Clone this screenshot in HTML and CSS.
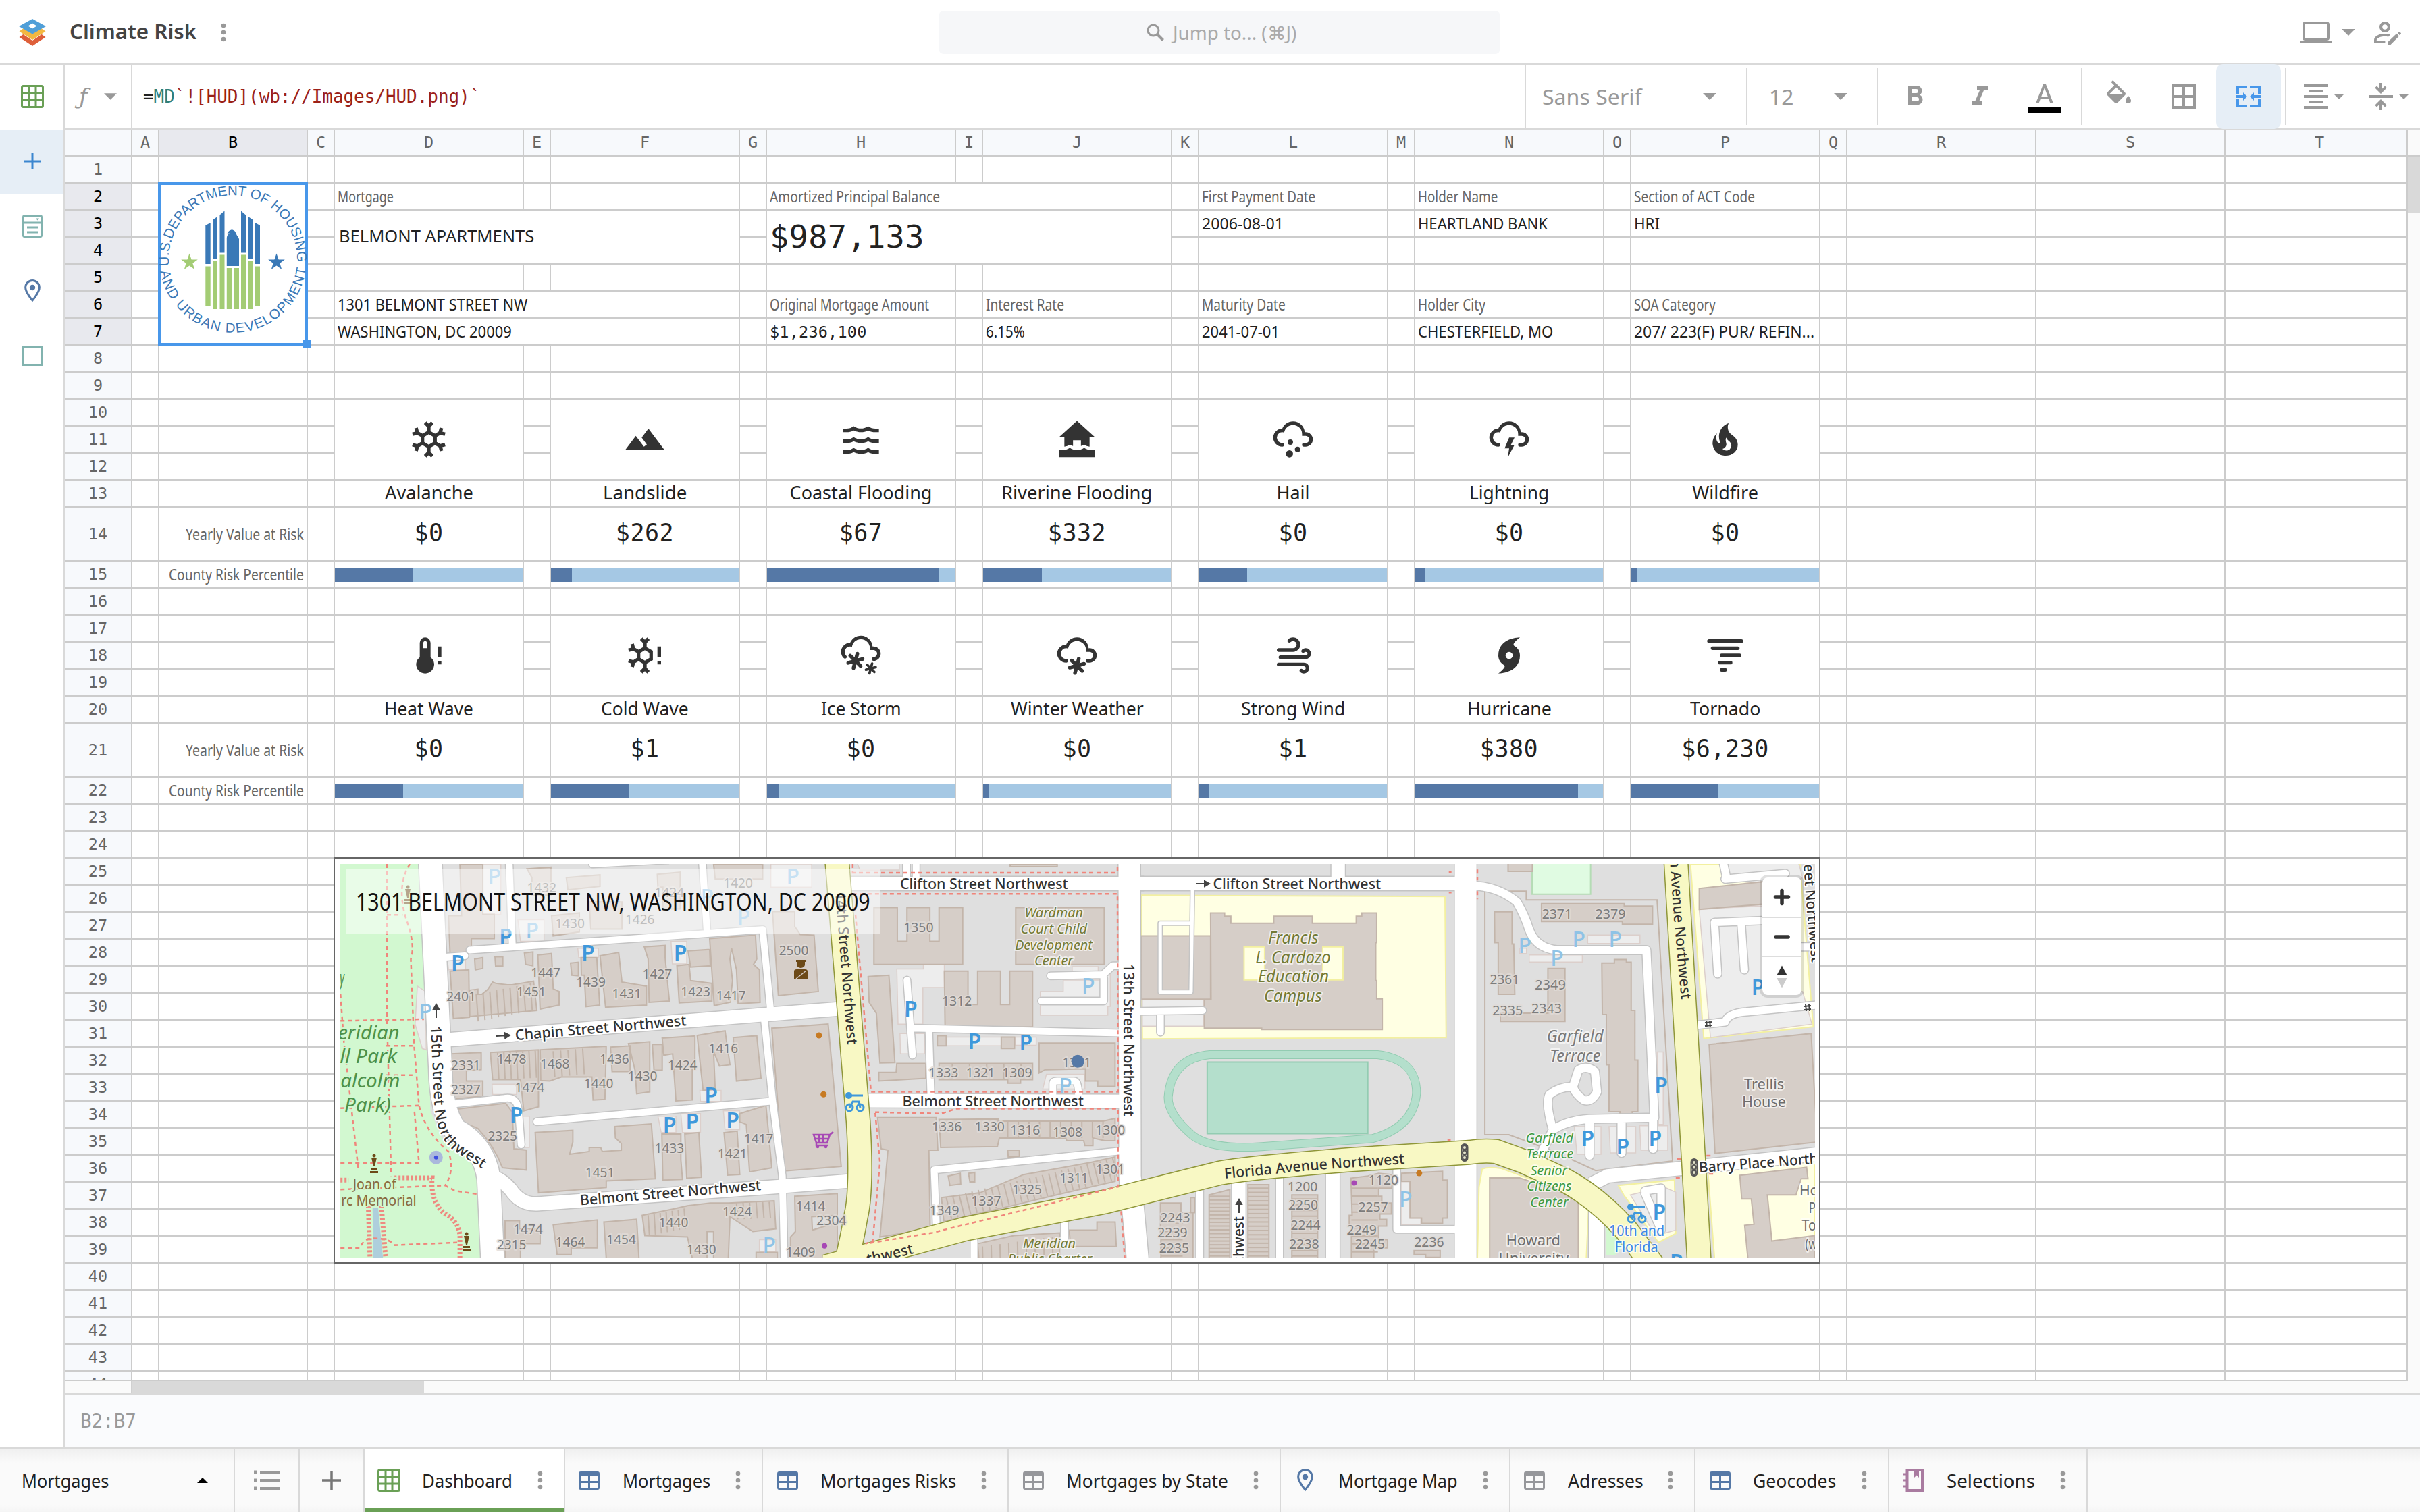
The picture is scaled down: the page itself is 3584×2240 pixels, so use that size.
FILE: index.html
```html
<!DOCTYPE html>
<html lang="en">
<head>
<meta charset="utf-8">
<title>Climate Risk</title>
<link rel="stylesheet" href="styles.css">
</head>
<body>
<svg class="defs" aria-hidden="true">
  <symbol id="i-dots" viewBox="0 0 8 28"><circle cx="4" cy="4" r="3.3"/><circle cx="4" cy="14" r="3.3"/><circle cx="4" cy="24" r="3.3"/></symbol>
  <symbol id="i-caret" viewBox="0 0 20 10"><path d="M0 0H20L10 10Z"/></symbol>
  <symbol id="i-sheet" viewBox="0 0 34 34"><rect x="1.5" y="1.5" width="31" height="31" rx="2" fill="none" stroke="currentColor" stroke-width="3"/><path d="M12 1V33M22 1V33M1 12H33M1 22H33" fill="none" stroke="currentColor" stroke-width="3"/></symbol>
  <symbol id="i-table" viewBox="0 0 31 27"><path fill-rule="evenodd" d="M3 0H28A3 3 0 0 1 31 3V24A3 3 0 0 1 28 27H3A3 3 0 0 1 0 24V3A3 3 0 0 1 3 0ZM3 7V14H14V7ZM17 7V14H28V7ZM3 17V24H14V17ZM17 17V24H28V17Z"/></symbol>
  <symbol id="i-pin" viewBox="0 0 24 34"><path d="M12 1.5A10.3 10.3 0 0 0 1.7 12C1.7 19 12 31 12 31S22.300 19 22.300 12A10.300 10.300 0 0 0 12 1.500Z" fill="none" stroke="currentColor" stroke-width="3"/><circle cx="12" cy="12" r="4.200"/></symbol>
  <symbol id="i-book" viewBox="0 0 32 34"><path d="M6.500 2H29V32H6.500Z" fill="none" stroke="currentColor" stroke-width="4"/><path d="M17 3H24V13L20.500 9.500L17 13Z"/><path d="M0 8H8M0 17H8M0 26H8" stroke="currentColor" stroke-width="3"/></symbol>
  <symbol id="i-flake" viewBox="0 0 24 24"><path d="M20.79,13.95L18.46,14.57L16.46,13.44V10.56L18.46,9.43L20.79,10.05L21.31,8.12L19.54,7.65L20,5.88L18.07,5.36L17.45,7.69L15.45,8.82L13,7.38V5.12L14.71,3.41L13.29,2L12,3.29L10.71,2L9.29,3.41L11,5.12V7.38L8.5,8.82L6.5,7.69L5.92,5.36L4,5.88L4.47,7.65L2.7,8.12L3.22,10.05L5.55,9.43L7.55,10.56V13.45L5.55,14.58L3.22,13.96L2.7,15.89L4.47,16.36L4,18.12L5.93,18.64L6.55,16.31L8.55,15.18L11,16.62V18.88L9.29,20.59L10.71,22L12,20.71L13.29,22L14.7,20.59L13,18.88V16.62L15.5,15.17L17.5,16.3L18.12,18.63L20,18.12L19.53,16.35L21.3,15.88L20.79,13.95M9.5,10.56L12,9.11L14.5,10.56V13.44L12,14.89L9.5,13.44V10.56Z"/></symbol>
  <symbol id="i-slide" viewBox="0 0 24 24"><path d="M14,6L10.25,11L13.1,14.8L11.5,16C9.81,13.75 7,10 7,10L1,18H23L14,6Z"/></symbol>
  <symbol id="i-waves" viewBox="0 0 24 24"><path d="M20,12H22V14H20C18.62,14 17.26,13.65 16,13C13.5,14.3 10.5,14.3 8,13C6.74,13.65 5.37,14 4,14H2V12H4C5.39,12 6.78,11.53 8,10.67C10.44,12.38 13.56,12.38 16,10.67C17.22,11.53 18.61,12 20,12M20,6H22V8H20C18.62,8 17.26,7.65 16,7C13.5,8.3 10.5,8.3 8,7C6.74,7.65 5.37,8 4,8H2V6H4C5.39,6 6.78,5.53 8,4.67C10.44,6.38 13.56,6.38 16,4.67C17.22,5.53 18.61,6 20,6M20,18H22V20H20C18.62,20 17.26,19.65 16,19C13.5,20.3 10.5,20.3 8,19C6.74,19.65 5.37,20 4,20H2V18H4C5.39,18 6.78,17.53 8,16.67C10.44,18.38 13.56,18.38 16,16.67C17.22,17.53 18.61,18 20,18Z"/></symbol>
  <symbol id="i-house" viewBox="0 0 24 24"><path d="M12 1.700L2.200 10.600H5V16C6.100 15.900 7.100 15.500 8 14.900C8.600 15.300 9.200 15.600 9.800 15.700V12.500H14.200V15.700C14.800 15.600 15.400 15.300 16 14.900C16.900 15.500 17.900 15.900 19 16V10.600H21.800ZM2 18V21.800H22V18H20C18.600 18 17.200 17.500 16 16.700C13.600 18.400 10.400 18.400 8 16.700C6.800 17.500 5.400 18 4 18Z"/></symbol>
  <symbol id="i-cloud" viewBox="0 0 24 24"><path d="M6,14A1,1 0 0,1 7,15A1,1 0 0,1 6,16A5,5 0 0,1 1,11A5,5 0 0,1 6,6C7,3.65 9.3,2 12,2C15.43,2 18.24,4.66 18.5,8.03L19,8A4,4 0 0,1 23,12A4,4 0 0,1 19,16H18A1,1 0 0,1 17,15A1,1 0 0,1 18,14H19A2,2 0 0,0 21,12A2,2 0 0,0 19,10H17V9A5,5 0 0,0 12,4C9.5,4 7.45,5.82 7.06,8.19C6.73,8.07 6.37,8 6,8A3,3 0 0,0 3,11A3,3 0 0,0 6,14"/></symbol>
  <symbol id="i-hail" viewBox="0 0 24 24"><use href="#i-cloud"/><circle cx="10" cy="20" r="2"/><circle cx="14.500" cy="17.500" r="1.500"/><circle cx="10.500" cy="13.500" r="1.500"/></symbol>
  <symbol id="i-bolt" viewBox="0 0 24 24"><use href="#i-cloud"/><path d="M12,11H15L13,15H15L11.25,22L12,17H9.5L12,11Z"/></symbol>
  <symbol id="i-fire" viewBox="0 0 24 24"><path d="M17.66 11.2C17.43 10.9 17.15 10.64 16.89 10.38C16.22 9.78 15.46 9.35 14.82 8.72C13.33 7.26 13 4.85 13.95 3C13 3.23 12.17 3.75 11.46 4.32C8.87 6.4 7.85 10.07 9.07 13.22C9.11 13.32 9.15 13.42 9.15 13.55C9.15 13.77 9 13.97 8.8 14.05C8.57 14.15 8.33 14.09 8.14 13.93C8.08 13.88 8.04 13.83 8 13.76C6.87 12.33 6.69 10.28 7.45 8.64C5.78 10 4.87 12.3 5 14.47C5.06 14.97 5.12 15.47 5.29 15.97C5.43 16.57 5.7 17.17 6 17.7C7.08 19.43 8.95 20.67 10.96 20.92C13.1 21.19 15.39 20.8 17.03 19.32C18.86 17.66 19.5 15 18.56 12.72L18.43 12.46C18.22 12 17.66 11.2 17.66 11.2M14.5 17.5C14.22 17.74 13.76 18 13.4 18.1C12.28 18.5 11.16 17.94 10.5 17.28C11.69 17 12.4 16.12 12.61 15.23C12.78 14.43 12.46 13.77 12.33 13C12.21 12.26 12.23 11.63 12.5 10.94C12.69 11.32 12.89 11.7 13.13 12C13.9 13 15.11 13.44 15.37 14.8C15.41 14.94 15.43 15.08 15.43 15.23C15.46 16.05 15.1 16.95 14.5 17.5Z"/></symbol>
  <symbol id="i-heat" viewBox="0 0 24 24"><path fill-rule="evenodd" d="M17 7H19V13H17ZM17 15H19V17H17ZM13 13V5A3 3 0 0 0 7 5V13A5 5 0 1 0 13 13M10 4A1 1 0 0 1 11 5V8H9V5A1 1 0 0 1 10 4Z"/></symbol>
  <symbol id="i-cold" viewBox="0 0 24 24"><path d="M16.46,14.600V9.400L15.45,8.82L13,7.38V5.12L14.71,3.41L13.29,2L12,3.29L10.71,2L9.29,3.41L11,5.12V7.38L8.5,8.82L6.5,7.69L5.92,5.36L4,5.88L4.47,7.65L2.7,8.12L3.22,10.05L5.55,9.43L7.55,10.56V13.45L5.55,14.58L3.22,13.96L2.7,15.89L4.47,16.36L4,18.12L5.93,18.64L6.55,16.31L8.55,15.18L11,16.62V18.88L9.29,20.59L10.71,22L12,20.71L13.29,22L14.7,20.59L13,18.88V16.62L15.5,15.17ZM9.5,10.56L12,9.11L14.5,10.56V13.44L12,14.89L9.5,13.44V10.56Z"/><path d="M19 7H21V13H19ZM19 15H21V17H19Z"/></symbol>
  <symbol id="i-star6" viewBox="0 0 24 24"><path d="M4,16.36C3.86,15.82 4.18,15.25 4.73,15.11L7,14.5L5.33,12.86C4.93,12.46 4.93,11.81 5.33,11.4C5.73,11 6.4,11 6.79,11.4L8.45,13.05L9.04,10.8C9.18,10.24 9.75,9.92 10.29,10.07C10.85,10.21 11.17,10.78 11,11.33L10.42,13.58L12.67,13C13.22,12.83 13.79,13.15 13.93,13.71C14.08,14.25 13.76,14.82 13.2,14.96L10.95,15.55L12.6,17.21C13,17.6 13,18.27 12.6,18.67C12.2,19.07 11.54,19.07 11.15,18.67L9.5,17L8.89,19.27C8.75,19.83 8.18,20.14 7.64,20C7.08,19.86 6.77,19.29 6.91,18.74L7.5,16.5L5.26,17.09C4.71,17.23 4.14,16.92 4,16.36"/></symbol>
  <symbol id="i-ice" viewBox="0 0 24 24"><path d="M1,10A5,5 0 0,1 6,5C7,2.65 9.3,1 12,1C15.43,1 18.24,3.66 18.5,7.03L19,7A4,4 0 0,1 23,11A4,4 0 0,1 19,15A1,1 0 0,1 18,14A1,1 0 0,1 19,13A2,2 0 0,0 21,11A2,2 0 0,0 19,9H17V8A5,5 0 0,0 12,3C9.5,3 7.45,4.82 7.06,7.19C6.73,7.07 6.37,7 6,7A3,3 0 0,0 3,10C3,10.85 3.35,11.61 3.91,12.16C4.27,12.55 4.26,13.16 3.88,13.54C3.5,13.93 2.85,13.93 2.47,13.54C1.56,12.62 1,11.37 1,10"/><use href="#i-star6" width="24" height="24"/><g transform="translate(11.400 9) scale(.68)"><use href="#i-star6" width="24" height="24"/></g></symbol>
  <symbol id="i-snow" viewBox="0 0 24 24"><use href="#i-cloud"/><g transform="translate(3 2.700)"><use href="#i-star6" width="24" height="24"/></g></symbol>
  <symbol id="i-wind" viewBox="0 0 24 24"><path d="M4,10A1,1 0 0,1 3,9A1,1 0 0,1 4,8H12A2,2 0 0,0 14,6A2,2 0 0,0 12,4C11.45,4 10.95,4.22 10.59,4.59C10.2,5 9.56,5 9.17,4.59C8.78,4.2 8.78,3.56 9.17,3.17C9.9,2.45 10.9,2 12,2A4,4 0 0,1 16,6A4,4 0 0,1 12,10H4M19,12A1,1 0 0,0 20,11A1,1 0 0,0 19,10C18.72,10 18.47,10.11 18.29,10.29C17.9,10.68 17.27,10.68 16.88,10.29C16.5,9.9 16.5,9.27 16.88,8.88C17.42,8.34 18.17,8 19,8A3,3 0 0,1 22,11A3,3 0 0,1 19,14H5A1,1 0 0,1 4,13A1,1 0 0,1 5,12H19M18,18H4A1,1 0 0,1 3,17A1,1 0 0,1 4,16H18A3,3 0 0,1 21,19A3,3 0 0,1 18,22C17.17,22 16.42,21.66 15.88,21.12C15.5,20.73 15.5,20.1 15.88,19.71C16.27,19.32 16.9,19.32 17.29,19.71C17.47,19.89 17.72,20 18,20A1,1 0 0,0 19,19A1,1 0 0,0 18,18Z"/></symbol>
  <symbol id="i-hurricane" viewBox="0 0 24 24"><path d="M15,6.79C16.86,7.86 18,9.85 18,12C18,22 6,22 6,22C7.25,21.06 8.38,19.95 9.34,18.71C9.38,18.66 9.41,18.61 9.44,18.55C9.69,18.06 9.5,17.46 9,17.21C7.14,16.14 6,14.15 6,12C6,2 18,2 18,2C16.75,2.94 15.62,4.05 14.66,5.29C14.62,5.34 14.59,5.39 14.56,5.45C14.31,5.94 14.5,6.54 15,6.79M12,14A2,2 0 0,0 14,12A2,2 0 0,0 12,10A2,2 0 0,0 10,12A2,2 0 0,0 12,14Z"/></symbol>
  <symbol id="i-tornado" viewBox="0 0 24 24"><path d="M21,5H3A1,1 0 0,1 2,4A1,1 0 0,1 3,3H21A1,1 0 0,1 22,4A1,1 0 0,1 21,5M20,8A1,1 0 0,0 19,7H5A1,1 0 0,0 4,8A1,1 0 0,0 5,9H19A1,1 0 0,0 20,8M21,12A1,1 0 0,0 20,11H10A1,1 0 0,0 9,12A1,1 0 0,0 10,13H20A1,1 0 0,0 21,12M16,16A1,1 0 0,0 15,15H9A1,1 0 0,0 8,16A1,1 0 0,0 9,17H15A1,1 0 0,0 16,16M13,20A1,1 0 0,0 12,19H10A1,1 0 0,0 9,20A1,1 0 0,0 10,21H12A1,1 0 0,0 13,20Z"/></symbol>
</svg>

<header class="top">
  <div class="top-left">
    <svg class="logo" viewBox="0 0 40 40"><path d="M0.500 27L20 40L39.500 27L33 22.500L20 31L7 22.500Z" fill="#de5f3a"/><path d="M0.500 19L20 32L39.500 19L33 14.500L20 23L7 14.500Z" fill="#fff"/><path d="M0.500 18.500L20 31L39.500 18.500L33 14L20 22L7 14Z" fill="#f3b841"/><path fill-rule="evenodd" d="M20 0L40 11L20 22.500L0 11ZM20 6.500L13.500 10.500L20 14.500L26.500 10.500Z" fill="#509fd8"/></svg>
    <span class="title" data-w="188">Climate Risk</span>
    <svg class="dots"><use href="#i-dots"/></svg>
  </div>
  <div class="jump">
    <svg class="search" viewBox="0 0 28 28"><circle cx="11" cy="11" r="8" fill="none" stroke="#999" stroke-width="3"/><path d="M17 17L25.500 25.500" stroke="#999" stroke-width="4"/></svg>
    <span data-w="183">Jump to... (⌘J)</span>
  </div>
  <div class="top-right">
    <svg class="ico" viewBox="0 0 24 24"><path d="M4,6H20V16H4M20,18A2,2 0 0,0 22,16V6C22,4.89 21.1,4 20,4H4C2.89,4 2,4.89 2,6V16A2,2 0 0,0 4,18H0V20H24V18H20Z"/></svg>
    <svg class="caret"><use href="#i-caret"/></svg>
    <svg class="ico" viewBox="0 0 24 24"><path fill-rule="evenodd" d="M10 4A4 4 0 1 0 10 12A4 4 0 1 0 10 4ZM10 6.100A1.900 1.900 0 1 1 10 9.900A1.900 1.900 0 1 1 10 6.100Z"/><path d="M10 13C6 13 2 14.700 2 17.500V20H10.200V18.100H3.900V17.500C3.900 16.500 6.900 14.900 10 14.900C10.900 14.900 11.700 15 12.500 15.200L14 13.700C12.800 13.200 11.400 13 10 13ZM20.200 11.700L20.900 11.500L22 12.600L21.800 13.300L21 14.100L19.400 12.500ZM12 19.200L18.700 12.900L20.500 14.700L14 21.200H12Z"/></svg>
  </div>
</header>

<div class="work">
  <nav class="side">
    <div class="slot green"><svg class="s34"><use href="#i-sheet"/></svg></div>
    <div class="slot add"><svg class="s24" viewBox="0 0 24 24"><path d="M12 0V24M0 12H24" stroke="currentColor" stroke-width="3"/></svg></div>
    <div class="slot teal"><svg class="s34" viewBox="0 0 34 34"><g fill="none" stroke="currentColor" stroke-width="3"><rect x="3.500" y="1.500" width="27" height="31" rx="2"/><path d="M3 12H31M9 19H25M9 26H25"/></g><path d="M22 5.500H27L24.500 8.500Z"/></svg></div>
    <div class="slot blue"><svg class="pin"><use href="#i-pin"/></svg></div>
    <div class="slot teal"><svg class="s30" viewBox="0 0 30 30"><rect x="1.500" y="1.500" width="27" height="27" fill="none" stroke="currentColor" stroke-width="3"/></svg></div>
  </nav>
  <main class="panel">
    <div class="bar">
      <div class="fx"><span class="f">ƒ</span><svg class="caret"><use href="#i-caret"/></svg></div>
      <div class="formula">=<span class="fn">MD</span><span class="str">`![HUD](wb://Images/HUD.png)`</span></div>
      <div class="tools">
        <div class="pick family"><span data-w="147">Sans Serif</span><svg class="caret"><use href="#i-caret"/></svg></div>
        <div class="pick size"><span data-w="36">12</span><svg class="caret"><use href="#i-caret"/></svg></div>
        <div class="group three">
          <svg class="ico" viewBox="0 0 24 24"><path d="M13.5,15.5H10V12.5H13.5A1.5,1.5 0 0,1 15,14A1.5,1.5 0 0,1 13.5,15.5M10,6.5H13A1.5,1.5 0 0,1 14.5,8A1.5,1.5 0 0,1 13,9.5H10M15.6,10.79C16.57,10.11 17.25,9 17.25,8C17.25,5.74 15.5,4 13.25,4H7V18H14.04C16.14,18 17.75,16.3 17.75,14.21C17.75,12.69 16.89,11.39 15.6,10.79Z"/></svg>
          <svg class="ico" viewBox="0 0 24 24"><path d="M10,4V7H12.21L8.79,15H6V18H14V15H11.79L15.21,7H18V4H10Z"/></svg>
          <svg class="ico" viewBox="0 0 24 24"><path d="M9.62,12L12,5.67L14.37,12M11,3L5.5,17H7.75L8.87,14H15.12L16.25,17H18.5L13,3H11Z"/><path fill="#000" d="M0 20H24V24H0Z"/></svg>
        </div>
        <div class="group fills">
          <svg class="ico" viewBox="0 0 24 24"><path d="M19,11.5C19,11.5 17,13.67 17,15A2,2 0 0,0 19,17A2,2 0 0,0 21,15C21,13.67 19,11.5 19,11.5M5.21,10L10,5.21L14.79,10M16.56,8.94L7.62,0L6.21,1.41L8.59,3.79L3.44,8.94C2.85,9.5 2.85,10.47 3.44,11.06L8.94,16.56C9.23,16.85 9.62,17 10,17C10.38,17 10.77,16.85 11.06,16.56L16.56,11.06C17.15,10.47 17.15,9.5 16.56,8.94Z"/></svg>
          <svg class="ico" viewBox="0 0 24 24"><path d="M19,11H13V5H19M19,19H13V13H19M11,11H5V5H11M11,19H5V13H11M3,21H21V3H3V21Z"/></svg>
          <div class="merge"><svg class="ico" viewBox="0 0 24 24"><path d="M5,10H3V4H11V6H5V10M19,18H13V20H21V14H19V18M5,18V14H3V20H11V18H5M21,4H13V6H19V10H21V4M8,13V15L11,12L8,9V11H3V13H8M16,11V9L13,12L16,15V13H21V11H16Z"/></svg></div>
        </div>
        <div class="group aligns">
          <svg class="ico" viewBox="0 0 24 24"><path d="M3,3H21V5H3V3M7,7H17V9H7V7M3,11H21V13H3V11M7,15H17V17H7V15M3,19H21V21H3V19Z"/></svg>
          <svg class="caret sm"><use href="#i-caret"/></svg>
          <svg class="ico" viewBox="0 0 24 24"><path d="M3,11H21V13H3ZM11 2H13V6.200L15 4.200L16.400 5.600L12 10L7.600 5.600L9 4.200L11 6.200ZM11 22H13V17.800L15 19.800L16.400 18.400L12 14L7.600 18.400L9 19.800L11 17.800Z"/></svg>
          <svg class="caret sm"><use href="#i-caret"/></svg>
        </div>
      </div>
    </div>

    <div class="sheet-wrap">
      <div class="sheet" id="sheet">
        <div class="image-cell">
          <svg viewBox="236 272 218 238">
            <defs><path id="arcTop" d="M250.500 394A95 95 0 1 1 439.500 394"/><path id="arcBottom" d="M237.500 402A109 109 0 0 0 452.500 402"/></defs>
            <g class="hud-text"><text><textPath href="#arcTop" textLength="312" lengthAdjust="spacing">U.S.DEPARTMENT OF HOUSING</textPath></text><text><textPath href="#arcBottom" textLength="311" lengthAdjust="spacing">AND URBAN DEVELOPMENT</textPath></text></g>
            <g fill="#3a79b7"><path d="M304.300 334L311.700 330V391H304.300ZM315 325.700L322 321V383.500H315ZM325.500 318.500L332.500 312.500V374.500H325.500ZM385 334L377.900 330V391H385ZM374.700 325.700L367.700 321V383.500H374.700ZM364 318.500L357 312.500V374.500H364ZM335.800 394V353C336 348 339 346 340 345L336.500 346.500C338 342 342 339.500 345.500 341C350 343 349 347 352 350L354 354V394Z"/><path d="M409.500 375.500L412.600 384.500H421.800L414.400 390L417.200 399L409.500 393.500L401.800 399L404.600 390L397.200 384.500H406.400Z"/></g>
            <g fill="#a3cc74"><path d="M304.300 394.500H311.700V454H304.300ZM315 386H322V458H315ZM325.500 377.500H332.500V458H325.500ZM335.800 397H343.300V458H335.800ZM346.700 397H354V458H346.700ZM357 377.500H364V458H357ZM367.700 386H374.700V458H367.700ZM377.900 394.500H385V454H377.900Z"/><path d="M280.500 375.500L283.600 384.500H292.800L285.400 390L288.200 399L280.500 393.500L272.800 399L275.600 390L268.200 384.500H277.400Z"/></g>
          </svg>
          <i class="handle"></i>
        </div>
        <div class="map-cell">
          <svg id="map" viewBox="504 1280 2184 584"></svg>
          <div class="map-title"><span data-w="762">1301 BELMONT STREET NW, WASHINGTON, DC 20009</span></div>
          <div class="map-zoom">
            <svg viewBox="0 0 58 58"><path d="M29 19.500V38.500M19.500 29H38.500" stroke="#333" stroke-width="5.500" stroke-linecap="round"/></svg>
            <svg viewBox="0 0 58 58"><path d="M19.500 29H38.500" stroke="#333" stroke-width="5.500" stroke-linecap="round"/></svg>
            <svg viewBox="0 0 58 58"><path d="M21 28L29 13L37 28Z" fill="#333"/><path d="M21 32L29 47L37 32Z" fill="#ccc"/></svg>
          </div>
        </div>
      </div>
      <div class="vscroll"><div class="vhead"></div><div class="vthumb"></div></div>
    </div>
    <div class="hscroll"><div class="hcorner"></div><div class="hthumb"></div></div>
    <div class="status">B2:B7</div>
  </main>
</div>

<footer class="tabs">
  <div class="book"><span data-w="129">Mortgages</span><svg class="up" viewBox="0 0 16 8"><path d="M0 8H16L8 0Z"/></svg></div>
  <div class="tool"><svg viewBox="0 0 38 32"><path d="M9 4H38M9 16H38M9 28H38" stroke="#999" stroke-width="4"/><path d="M0 4H5M0 16H5M0 28H5" stroke="#999" stroke-width="5"/></svg></div>
  <div class="tool"><svg class="s28" viewBox="0 0 28 28"><path d="M14 0V28M0 14H28" stroke="#777" stroke-width="3.500"/></svg></div>
  <div class="tab active"><i><svg class="s34 green"><use href="#i-sheet"/></svg></i><span data-w="134">Dashboard</span><svg class="dots"><use href="#i-dots"/></svg></div>
  <div class="tab"><i><svg class="tbl blue"><use href="#i-table"/></svg></i><span data-w="130">Mortgages</span><svg class="dots"><use href="#i-dots"/></svg></div>
  <div class="tab"><i><svg class="tbl blue"><use href="#i-table"/></svg></i><span data-w="201">Mortgages Risks</span><svg class="dots"><use href="#i-dots"/></svg></div>
  <div class="tab"><i><svg class="tbl gray"><use href="#i-table"/></svg></i><span data-w="240">Mortgages by State</span><svg class="dots"><use href="#i-dots"/></svg></div>
  <div class="tab"><i><svg class="pin blue"><use href="#i-pin"/></svg></i><span data-w="177">Mortgage Map</span><svg class="dots"><use href="#i-dots"/></svg></div>
  <div class="tab"><i><svg class="tbl gray"><use href="#i-table"/></svg></i><span data-w="112">Adresses</span><svg class="dots"><use href="#i-dots"/></svg></div>
  <div class="tab"><i><svg class="tbl blue"><use href="#i-table"/></svg></i><span data-w="123">Geocodes</span><svg class="dots"><use href="#i-dots"/></svg></div>
  <div class="tab"><i><svg class="s34 plum"><use href="#i-book"/></svg></i><span data-w="131">Selections</span><svg class="dots"><use href="#i-dots"/></svg></div>
</footer>
<script src="script.js"></script>
</body>
</html>
```

FILE: styles.css
```css
* { box-sizing: border-box; }
body { margin: 0; width: 3584px; height: 2240px; overflow: hidden; display: flex; flex-direction: column; background: #fff; color: #222; font-family: "Noto Sans", sans-serif; }
svg { display: block; fill: currentColor; flex: none; }
.defs { position: absolute; width: 0; height: 0; }
[data-w] { display: inline-block; white-space: nowrap; transform-origin: 0 50%; }
.green { color: #6aa056; }
.blue { color: #5578a6; }
.teal { color: #82b3af; }
.gray { color: #96979b; }
.plum { color: #a97ba0; }
.s34 { width: 34px; height: 34px; }
.s30 { width: 30px; height: 30px; }
.s28 { width: 28px; height: 28px; }
.s24 { width: 24px; height: 24px; }
.pin { width: 24px; height: 34px; }
.tbl { width: 31px; height: 27px; }
.ico { width: 48px; height: 48px; }
.dots { width: 8px; height: 28px; color: #999; }
.caret { width: 20px; height: 10px; color: #999; }
.caret.sm { width: 16px; height: 8px; }

.top { height: 96px; flex: none; border-bottom: 2px solid #d9d9d9; display: grid; grid-template-columns: 1390px 832px 1fr; align-items: center; color: #999; padding-top: 2px; }
.top-left { display: flex; align-items: center; padding-left: 28px; }
.logo { width: 40px; height: 40px; margin-right: 35px; }
.title { font-size: 30px; font-weight: 600; line-height: 38px; padding-bottom: 2px; color: #444; }
.top .dots { margin-left: 36px; }
.jump { height: 64px; border-radius: 8px; background: #f6f7f9; display: flex; align-items: center; padding-left: 307px; gap: 12px; font-size: 27px; color: #aaa; }
.search { width: 28px; height: 28px; }
.top-right { display: flex; align-items: center; justify-content: flex-end; padding-right: 24px; }
.top-right .caret { margin: 0 24px 0 14px; }

.work { flex: 1; min-height: 0; display: flex; }
.side { width: 96px; border-right: 2px solid #d9d9d9; flex: none; }
.slot { height: 96px; display: flex; align-items: center; justify-content: center; padding: 0 0 2px 2px; }
.slot.add { background: #e6eef6; color: #3b86cf; }
.panel { flex: 1; min-width: 0; display: flex; flex-direction: column; }

.bar { height: 96px; flex: none; border-bottom: 2px solid #d9d9d9; display: flex; color: #999; }
.fx { width: 100px; border-right: 2px solid #d9d9d9; display: flex; align-items: center; gap: 14px; padding-left: 21px; }
.fx .f { font: italic 34px "DejaVu Serif", serif; line-height: 40px; width: 23px; }
.fx .caret { width: 19px; }
.formula { flex: 1; padding-left: 16px; font: 26px/94px "DejaVu Sans Mono", monospace; letter-spacing: -.05px; color: #222; white-space: pre; }
.fn { color: #2f7f79; }
.str { color: #9b2118; }
.tools { display: flex; width: 1326px; border-left: 2px solid #d9d9d9; align-items: center; }
.pick { height: 84px; border-right: 2px solid #d9d9d9; display: flex; align-items: center; justify-content: space-between; font-size: 31px; }
.family { width: 328px; padding: 0 44px 0 24px; }
.size { width: 194px; padding: 0 44px 0 32px; }
.group { display: flex; align-items: center; }
.three { width: 302px; height: 84px; border-right: 2px solid #d9d9d9; padding-left: 30px; gap: 48px; }
.fills { padding-left: 30px; width: 298px; gap: 48px; }
.merge { margin: 0 -24px; width: 96px; height: 96px; border-radius: 10px; background: #e6eef6; color: #4897ea; display: flex; align-items: center; justify-content: center; flex: none; }
.aligns { height: 84px; border-left: 2px solid #d9d9d9; margin-left: 2px; padding-left: 20px; }
.aligns .caret { margin: 0 30px 0 2px; }
.aligns .caret:last-child { margin-right: 0; }

.sheet-wrap { display: flex; height: 1854px; flex: none; }
.sheet { width: 3470px; height: 1854px; overflow: hidden; display: grid; grid-template-columns: 100px 40px 220px 40px 280px 40px 280px 40px 280px 40px 280px 40px 280px 40px 280px 40px 280px 40px 280px 280px 280px; grid-template-rows: repeat(14, 40px) 80px repeat(6, 40px) 80px repeat(22, 40px) 14px; border-right: 2px solid #ccc; border-bottom: 2px solid #ccc; }
.cell { border-right: 2px solid #ccc; border-bottom: 2px solid #ccc; background: #fff; min-width: 0; min-height: 0; display: flex; align-items: center; padding: 0 4px; line-height: 36px; white-space: nowrap; overflow: hidden; font-size: 23px; }
.cell.hd { background: #f7f9fc; color: #666; justify-content: center; font-family: "DejaVu Sans Mono", monospace; font-size: 23.500px; padding: 0; }
.cell.hd.on { background: #e8e9ee; color: #000; }
.cell.last { align-items: flex-start; border-bottom: 0; }
.cell.label { color: #666; }
.cell.right { justify-content: flex-end; }
.cell.big { font-size: 25px; padding: 0 6px 4px; }
.cell.mono { font-family: "DejaVu Sans Mono", monospace; font-size: 23.500px; letter-spacing: .2px; padding-top: 1px; }
.cell.huge { font-family: "DejaVu Sans Mono", monospace; font-size: 47px; letter-spacing: .3px; line-height: 60px; padding: 0 4px; }
.cell.icon { justify-content: center; padding: 0; color: #333; }
.cell.icon svg { width: 64px; height: 64px; }
.cell.name { justify-content: center; font-size: 27px; padding: 0 0 2px; }
.cell.money { justify-content: center; font-family: "DejaVu Sans Mono", monospace; font-size: 35px; letter-spacing: .5px; padding: 0 0 4px; }
.cell.pct { padding: 2px 0 0; }
.track { flex: 1; height: 20px; background: #a5c8e4; }
.fill { height: 20px; background: #5578a6; }

.image-cell { grid-area: 3 / 3 / 9 / 4; position: relative; z-index: 2; margin: -2px 0 0 -2px; border: 4px solid #4897ea; background: #fff; width: 222px; height: 242px; display: flex; align-items: center; justify-content: center; }
.image-cell svg { width: 218px; height: 238px; margin: -2px; }
.hud-text { font: 20.500px "Liberation Sans", sans-serif; fill: #3a79b7; }
.handle { position: absolute; right: -8px; bottom: -8px; width: 12px; height: 12px; background: #4897ea; }
.map-cell { grid-area: 26 / 5 / 41 / 18; position: relative; z-index: 1; margin: -2px 0 0 -2px; border: 2px solid #666; padding: 8px 6px 6px 8px; background: #fff; }
.map-cell > svg { width: 2184px; height: 584px; }
.map-title { position: absolute; left: 16px; top: 16px; width: 792px; height: 96px; background: rgba(255,255,255,.5); color: #111; font-size: 37px; line-height: 94px; padding-left: 15px; }
.map-zoom { position: absolute; right: 26px; top: 28px; width: 58px; height: 174px; border-radius: 8px; background: #fff; box-shadow: 0 0 0 4px rgba(0,0,0,.12); }
.map-zoom svg { width: 58px; height: 58px; }
.map-zoom svg + svg { border-top: 2px solid #ddd; }

.building { fill: #d6cec8; stroke: #c3b5aa; stroke-width: 2; }
.lot { fill: #ededed; stroke: #dccfcb; stroke-width: 1.500; }
.school { fill: #ffffe3; stroke: #f3f0a0; stroke-width: 2; }
.grass { fill: #d2f8d0; }
.lawn { fill: #e0fbe2; stroke: #b5dcb5; stroke-width: 2; }
.pitch { fill: #b4dfcc; stroke: #93ccb2; stroke-width: 2; }
.water { fill: #aecfdc; }
.walk { fill: none; stroke: #f0857b; stroke-width: 2.500; stroke-dasharray: 6 5; }
.steps { fill: none; stroke: #ee8a80; stroke-width: 7; stroke-dasharray: 3 3; }
.seam { fill: none; stroke: #c3b5aa; stroke-width: 2; }
.ring { fill: none; stroke: #b4dfcc; stroke-width: 11; }
.ring-edge { fill: none; stroke: #93ccb2; stroke-width: 13; }
.way { fill: none; stroke-linejoin: round; }
#map path[class] { vector-effect: non-scaling-stroke; }
#map text { font-family: "Noto Sans", sans-serif; paint-order: stroke; stroke: rgba(255,255,255,.65); stroke-width: 4px; stroke-linejoin: round; }
#map .num { font-size: 20px; fill: #7c7c7c; stroke: rgba(225,220,216,.8); }
#map .road { font-size: 21.500px; font-weight: 500; fill: #333; stroke: #fff; }
#map .on-yellow { stroke: #f8f8c4; }
#map .park { font-size: 29px; font-style: italic; fill: #4d9149; stroke: #d2f8d0; }
#map .memo { font-size: 22px; fill: #8a6a3f; stroke: #d2f8d0; }
#map .edu { font-size: 24.500px; font-style: italic; fill: #737a35; }
#map .edu-s { font-size: 20.500px; font-style: italic; fill: #737a35; }
#map .place { font-size: 24.500px; font-style: italic; fill: #7a7a7a; }
#map .plain { font-size: 22px; fill: #6d6d6d; }
#map .senior { font-size: 20.500px; font-style: italic; fill: #3e9a41; }
#map .bike { font-size: 22px; fill: #3d86e8; }
#map .p { font-size: 32px; font-weight: 600; fill: #3f98db; stroke: none; }
#map .p2 { font-size: 32px; font-weight: 500; fill: #8fc3e6; stroke: none; }

.vscroll { width: 18px; background: #fafafa; }
.vhead { height: 40px; border-bottom: 2px solid #ccc; }
.vthumb { height: 84px; background: #d9d9d9; }
.hscroll { height: 20px; flex: none; display: flex; background: #fafafa; border-bottom: 2px solid #d9d9d9; }
.hcorner { width: 100px; border-right: 2px solid #d0d0d0; }
.hthumb { width: 432px; background: #d9d9d9; }
.status { height: 78px; flex: none; background: #fafbfd; color: #999; font: 27.500px/78px "DejaVu Sans Mono", monospace; padding-left: 23px; }

.tabs { height: 96px; flex: none; border-top: 2px solid #d9d9d9; background: linear-gradient(#efefef, #fafafa 22px, #fafafa 84px, #f5f5f5); display: flex; font-size: 27px; line-height: 94px; }
.tabs > div { border-right: 2px solid #d9d9d9; display: flex; align-items: center; flex: none; }
.tabs span { line-height: 92px; padding-top: 2px; }
.book { width: 348px; padding: 0 38px 0 32px; justify-content: space-between; }
.up { width: 16px; height: 8px; color: #000; }
.tool { width: 96px; justify-content: center; }
.tool svg { width: 38px; height: 32px; }
.tool svg.s28 { width: 28px; height: 28px; }
.tab { padding: 0 31px 0 15px; }
.tab i { width: 42px; margin-right: 28px; display: flex; justify-content: center; }
.tab .dots { margin-left: 37px; }
.tab.active { background: #fff; box-shadow: inset 0 -6px #6aa056; }
```

FILE: script.js
```js
const sheet = document.getElementById('sheet');
const letters = 'ABCDEFGHIJKLMNOPQRST';
const spans = {};
const content = {};

// Each entry: cell reference -> column span, row span, class, html
function put(ref, cls, html, cs = 1, rs = 1) {
  content[ref] = { cls, html, cs, rs };
  const c = letters.indexOf(ref[0]), r = +ref.slice(1);
  for (let y = r; y < r + rs; y++) for (let x = c; x < c + cs; x++) spans[letters[x] + y] = true;
}
const t = (s, w) => `<span data-w="${w}">${s}</span>`;

put('D2', 'label', t('Mortgage', 83));
put('D3', 'big', t('BELMONT APARTMENTS', 289), 3, 2);
put('D6', '', t('1301 BELMONT STREET NW', 281), 3);
put('D7', '', t('WASHINGTON, DC 20009', 258), 3);
put('H2', 'label', t('Amortized Principal Balance', 252), 3);
put('H3', 'huge', '$987,133', 3, 2);
put('H6', 'label', t('Original Mortgage Amount', 236));
put('H7', 'mono', '$1,236,100');
put('J6', 'label', t('Interest Rate', 116));
put('J7', '', t('6.15%', 58));
put('L2', 'label', t('First Payment Date', 168));
put('L3', '', t('2006-08-01', 121));
put('L6', 'label', t('Maturity Date', 124));
put('L7', '', t('2041-07-01', 115));
put('N2', 'label', t('Holder Name', 118));
put('N3', '', t('HEARTLAND BANK', 192));
put('N6', 'label', t('Holder City', 100));
put('N7', '', t('CHESTERFIELD, MO', 200));
put('P2', 'label', t('Section of ACT Code', 179));
put('P3', '', t('HRI', 38));
put('P6', 'label', t('SOA Category', 121));
put('P7', '', t('207/ 223(F) PUR/ REFIN...', 267));

const hazards = [
  [10, 13, [['flake', 'Avalanche', 131, '$0', 41.4], ['slide', 'Landslide', 124, '$262', 11], ['waves', 'Coastal Flooding', 211, '$67', 91.8], ['house', 'Riverine Flooding', 223, '$332', 31.2], ['hail', 'Hail', 49, '$0', 25.4], ['bolt', 'Lightning', 118, '$0', 5], ['fire', 'Wildfire', 98, '$0', 3]]],
  [17, 20, [['heat', 'Heat Wave', 132, '$0', 36.3], ['cold', 'Cold Wave', 130, '$1', 41.4], ['ice', 'Ice Storm', 119, '$0', 6.3], ['snow', 'Winter Weather', 197, '$0', 3], ['wind', 'Strong Wind', 154, '$1', 5], ['hurricane', 'Hurricane', 125, '$380', 86.7], ['tornado', 'Tornado', 104, '$6,230', 46.3]]]
];
for (const [top, base, list] of hazards) {
  list.forEach(([icon, name, w, money, pct], i) => {
    const c = 'DFHJLNP'[i];
    put(c + top, 'icon', `<svg><use href="#i-${icon}"/></svg>`, 1, 3);
    put(c + base, 'name', t(name, w));
    put(c + (base + 1), 'money', money);
    put(c + (base + 2), 'pct', `<div class="track"><div class="fill" style="width:${pct}%"></div></div>`);
  });
  put('B' + (base + 1), 'label right', t('Yearly Value at Risk', 175));
  put('B' + (base + 2), 'label right', t('County Risk Percentile', 200));
}
put('B2', 'skip', '', 1, 6);
put('D25', 'skip', '', 13, 15);

let html = '';
const cell = (c, r, cls, inner, cs = 1, rs = 1) =>
  `<div class="cell ${cls}" style="grid-area:${r} / ${c} / span ${rs} / span ${cs}">${inner}</div>`;
html += cell(1, 1, 'hd', '');
[...letters].forEach((l, i) => { html += cell(i + 2, 1, l === 'B' ? 'hd on' : 'hd', l); });
for (let r = 1; r <= 44; r++) {
  html += cell(1, r + 1, 'hd' + (r >= 2 && r <= 7 ? ' on' : '') + (r === 44 ? ' last' : ''), r);
  [...letters].forEach((l, i) => {
    const d = content[l + r];
    if (d) { if (d.cls !== 'skip') html += cell(i + 2, r + 1, d.cls, d.html, d.cs, d.rs); }
    else if (!spans[l + r]) html += cell(i + 2, r + 1, r === 44 ? 'last' : '', '');
  });
}
sheet.insertAdjacentHTML('afterbegin', html);

// Map tiles: origin and scale of each tile's local units
const T = {
  a: [480, 1260, .4847, .4018],
  b: [1180, 1260, .35714, .4018],
  c: [1640, 1260, .35714, .4018],
  d: [2120, 1260, .3954, .4018]
};
const tf = k => `translate(${T[k][0]} ${T[k][1]}) scale(${T[k][2]} ${T[k][3]})`;
const shape = ([k, cls, d]) => `<path class="${cls}" transform="${tf(k)}" d="${d}"/>`;
const px = (k, x) => (T[k][0] + x * T[k][2]).toFixed(1);
const py = (k, y) => (T[k][1] + y * T[k][3]).toFixed(1);

const ground = [
  ['a', 'grass', 'M40 40H290L320 740 325 960 360 1060 440 1110 470 1180 480 1510H40Z'],
  ['a', 'lot', 'M285 500L310 520 312 735 300 730 278 640ZM375 385H432V440H380ZM480 50H540V235H480ZM592 255H672V335H600ZM775 360H838V395H778ZM1060 335H1108V418H1064ZM1148 885H1213V925H1150ZM1020 980H1075V1040H1030ZM1090 970H1150V1040H1095ZM1220 960H1270V1030H1225ZM513 862H588V900H515ZM585 980H627V1095H600ZM1330 1435H1380V1480H1330ZM1365 50H1490V135H1365Z'],
  ['b', 'lot', 'M250 45H425V72H262ZM415 437H525V420H612V505H523V640H420ZM428 675H530V750H430ZM618 688H848V720H618ZM905 688H993V718H905ZM1010 520H1105V478H1258V450H1300V575H1290V607H1010ZM1142 428H1250V460H1142ZM1035 825H1195V880H1020Z'],
  ['c', 'school', 'M140 165L1400 170 1405 690 145 695Z'],
  ['c', 'lot', 'M145 550H400V648H145ZM1218 1220H1255V1355H1300V1380H1218Z'],
  ['c', 'school', 'M1545 1503V1230L1568 1180V1503Z'],
  ['d', 'school', 'M970 50H1380L1430 650 1020 693ZM190 1175Q210 1165 260 1172L590 1290 580 1503H172L178 1240ZM700 1235L910 1215 915 1412 850 1445 720 1270ZM1035 1180L1436 1145V1503H1060Z'],
  ['d', 'lawn', 'M377 40H596V161H377Z'],
  ['d', 'grass', 'M650 1340L700 1420 740 1440 690 1490 655 1493Z'],
  ['d', 'lot', 'M1003 215L1240 200 1390 100 1375 45H1090L1100 110 1240 120V205ZM1003 218L1240 200V520H1390L1425 640 1045 690ZM585 312H781V343H585ZM366 385H565V411H366ZM330 360H356V380H330ZM845 743H868V1010H850ZM535 1018H635V1120H545ZM665 1018H765V1115H670ZM780 1015H885V1105H785ZM745 1270L870 1240 915 1260V1400L840 1420Z'],
  ['d', 'seam', 'M200 150H355V182H845L903 1145 615 1180 460 1110 290 1048H200Z']
];
const buildings = [
  ['a', 'M415 50H485V235H520V325H450V370L385 385 380 240H420ZM620 68L693 62V165H635V100ZM740 100L843 90V132L745 145ZM1018 88L1088 80V215H1035V135H1020ZM1190 50H1340V105H1195ZM810 190H910V290H815ZM695 240L780 230V300L700 315ZM385 445L442 440 444 615 395 620ZM460 400L485 395V435L462 440ZM522 392H546V426H524ZM612 378L638 374V425L616 420ZM653 385L695 380 700 510 718 520V570L660 585ZM753 415L777 412V462L757 460ZM785 395H833L842 570 800 576 795 460H786ZM843 388L900 376 910 485 985 500V570L860 578ZM978 355L1042 350V395L1055 555 993 560 990 400ZM1112 370L1178 365 1180 425 1120 430ZM1078 425L1115 420 1120 480 1185 490V555L1085 562ZM1178 325L1318 312 1322 400 1312 420 1330 440 1332 560 1265 565 1260 440 1245 360 1240 400 1248 480 1240 560 1192 572ZM1370 225H1438V280L1455 310 1497 312 1510 520 1388 535Z'],
  ['a', 'M444 515L470 512V530H482L500 512 515 485 525 490 560 495H575L600 490 640 482 650 590 445 612ZM387 750L480 745V808L435 812V850H485V905L392 918ZM508 745L655 735V945L610 960 600 845 515 845ZM660 735L862 722 858 918 822 920 818 835 725 835 690 850 662 848ZM875 725L935 720V815L880 815ZM930 712L995 705V890L955 897 950 810ZM1003 715H1033V810H1008ZM1033 692L1133 684V785H1125V920L1075 923 1065 750 1038 755ZM1140 682L1225 665 1240 790 1208 795 1190 740 1195 880 1158 885ZM1250 690L1322 683 1335 840 1260 850ZM395 955L555 932 575 965 580 1100 618 1105V1178L545 1170Q520 1090 470 1025L440 1010 430 1010Z'],
  ['a', 'M645 1040L760 1032V1075L750 1120 810 1110V1095H845L850 1110 908 1105V1080L890 1060 888 1018 1000 1008 1012 1210 862 1218V1243L655 1262ZM1032 1045H1090V1140L1095 1213 1035 1215ZM1102 1045L1145 1040 1153 1205 1108 1208ZM1222 1040L1262 1035 1270 1195 1233 1197ZM1270 970L1350 940 1368 1170 1300 1185 1290 1010 1270 1000ZM1368 655L1540 640 1580 1165 1402 1182ZM553 1365H597V1395H660V1450H600V1503H553ZM700 1380L835 1362V1465H755V1490H712ZM855 1370L955 1360 962 1503H862ZM972 1345L1065 1322 1110 1310 1180 1300H1235L1375 1292 1380 1395 1310 1405 1240 1350 1235 1503H1190V1405H1170V1503H1125L1110 1425 980 1420ZM1438 1275L1568 1265V1345L1490 1350 1492 1400 1568 1370V1503H1425V1425L1440 1405ZM1320 1482H1385V1503H1320Z'],
  ['b', 'M320 210H417V335H457V210H552V335H590V210H688V420H320ZM908 210H1275V420H908ZM612 445H710V568H750V445H845V568H883V445H978V650H615ZM296 465L382 460 407 782 345 783 330 600 300 560ZM415 785H535V840L340 850V818H412ZM583 683H620V720H583ZM848 688H903V730H848ZM590 785H978V845H928V858H875V845H590ZM1005 710H1320V870H1248V850H1197V805L1030 808 1005 820ZM335 985H578L585 1105H548L553 1395 345 1425 378 1105 350 1100ZM590 992L835 990V998H1270L1320 988V1070H1278L1228 1060V1088H1195L1190 1070 1120 1070 1115 1060H840L832 1092 597 1095ZM875 1105H923V1130H877ZM628 1200L678 1190 680 1230 635 1235ZM712 1190L738 1187V1222H718ZM600 1280L760 1262 940 1195 1220 1150 1320 1130V1220L1100 1265 890 1310 610 1368ZM1130 1400H1245V1370H1320L1325 1460H1135ZM750 1450L900 1420 1090 1410V1503H755ZM885 50H1080V60H885Z'],
  ['c', 'M140 315H428V548H140ZM428 230H486V242H512V268H690V242H850V268H1032V242H1055V230H1117V340H1113V480H1117V547H1140V660H640V655H402V548H430ZM220 1300H305V1335H355V1503H222V1410H220ZM345 1280H362V1335H345ZM422 1270L508 1250V1503H422ZM583 1232H670V1503H583ZM765 1270H872V1503H765ZM1010 1208L1080 1200 1125 1190 1180 1195V1245H1125V1275H1138V1300H1178V1340H1130V1360H1158V1385H1125V1435H1162V1465H1105V1503H1012V1385H1003V1345H1015ZM1220 1190L1390 1183V1215H1410V1355H1390V1375H1303V1355H1255V1220H1220ZM1272 1475H1380V1500H1320V1490H1272Z'],
  ['d', 'M287 45H378V77H287ZM412 196H722V205H828V272H715V262H412ZM236 226H302V345H308L312 530H250V340H237ZM436 435H500V630H258V600H436ZM638 415H685V402H730V412H748V590H762V773H773V963H752V972H706V963H665V790H655V605H640ZM1003 140L1240 115V198L1003 217ZM1040 715L1422 675 1445 1075 1062 1117ZM218 1207H330L550 1280V1503H218ZM1155 1198L1405 1168 1410 1210H1385L1365 1270H1258L1275 1440 1436 1420V1503H1185L1173 1382 1208 1378 1198 1285H1162Z']
].map(([k, d]) => [k, 'building', d]);

// Party walls of terraced houses
let seams = '';
const seamRow = (k, n, x1, y1, x2, y2, dx, dy) => {
  for (let i = 0; i <= n; i++) {
    const x = x1 + (x2 - x1) * i / n, y = y1 + (y2 - y1) * i / n;
    seams += shape([k, 'seam', `M${x} ${y}l${dx} ${dy}`]);
  }
};
seamRow('a', 8, 465, 530, 630, 490, 6, 100);
seamRow('a', 6, 530, 745, 645, 738, 4, 100);
seamRow('a', 4, 700, 740, 790, 730, 5, 95);
seamRow('a', 6, 990, 1345, 1100, 1320, 4, 75);
seamRow('a', 5, 1260, 1300, 1360, 1295, 4, 60);
seamRow('b', 4, 645, 785, 930, 785, 0, 60);
seamRow('b', 9, 875, 998, 1270, 998, 0, 62);
seamRow('b', 26, 620, 1280, 1310, 1135, 22, 78);
seamRow('c', 16, 422, 1275, 422, 1495, 86, 0);
seamRow('c', 16, 583, 1245, 583, 1495, 86, 0);
seamRow('c', 10, 765, 1285, 765, 1495, 107, 0);
seamRow('c', 8, 1012, 1245, 1012, 1480, 110, 0);
seamRow('c', 5, 222, 1345, 222, 1495, 90, 0);
seamRow('b', 8, 770, 1460, 1060, 1425, 2, 70);

// tile, width, path
const minor = [
  ['a', 34, 'M324 30L355 800Q357 960 400 1030 490 1090 503 1210L515 1520'],
  ['a', 20, 'M355 700L1370 603 1620 580'],
  ['a', 20, 'M520 1205Q545 1215 570 1250 600 1305 650 1303L1400 1238 1640 1215'],
  ['a', 10, 'M445 367L1340 292 1365 600M1345 620L1370 920 1400 1200 1406 1520M565 30L575 350M1155 30L1170 300M650 1000L1360 925M390 935L550 914Q590 905 594 960L602 1085M370 393L430 388M820 50L1050 35'],
  ['b', 20, 'M200 122H1440M270 922L1380 925'],
  ['b', 10, 'M457 478L480 755M475 655L1340 673M548 665L556 900M1340 1108L570 1178 580 1410M735 1440V1520M1110 1370V1430M455 30V110M495 30V110M1052 462L1270 458 1310 425H1340M1015 555H1273V470M1062 900V860Q1062 850 1080 850H1150Q1168 850 1168 900'],
  ['b', 32, 'M1379 30L1382 1200 1415 1520'],
  ['c', 20, 'M60 122H1480'],
  ['c', 10, 'M383 1230V1520M714 1200V1520M1200 1180V1395M1200 1397H1450M130 593L395 590M220 600V670'],
  ['c', 20, 'M545 1200V1520M935 1190V1520M957 40V115'],
  ['c', 5, 'M353 140L347 522H219L219 268H350'],
  ['d', 32, 'M128 30V1520'],
  ['d', 12, 'M130 130Q240 125 320 190 350 240 365 290 390 360 470 367H805L835 985 590 990Q510 995 455 1030L412 1115M455 1030Q425 930 442 900 480 870 530 872L550 810Q580 790 612 815L620 890Q600 930 570 920 540 900 530 872M592 990V1125M712 990V1115M830 990V1100'],
  ['d', 20, 'M600 1230L660 1200 940 1172 1460 1118'],
  ['d', 11, 'M985 645L1100 632Q1110 600 1180 595L1440 570M1100 105L1325 85M1105 100L1090 30M1072 455L1060 265 1240 258M1160 270L1172 440M800 1255L860 1245V1400L800 1265'],
  ['d', 22, 'M618 1260V1520'],
  ['d', 11, 'M1380 355H1440']
];
const major = [
  ['b', 34, 'M166 30L200 400 255 1000Q272 1250 245 1350 230 1430 205 1520'],
  ['b', 34, 'M120 1535L700 1395 1280 1295 1750 1190Q1850 1172 2300 1140L2788 1113Q2850 1105 2900 1110L3010 1145 3180 1213Q3320 1280 3440 1400L3560 1540'],
  ['d', 34, 'M915 30L982 1150 1003 1520']
];
const line = (list, extra, col) => list.map(([k, w, d]) =>
  `<path class="way" transform="${tf(k)}" d="${d}" stroke="${col}" stroke-width="${w + extra}" stroke-linecap="${w < 13 ? 'round' : 'butt'}"/>`).join('');

const details = [
  ['c', 'school', 'M567 355H652V477H567ZM893 355H977V477H893Z'],
  ['c', 'pitch', 'M414 780H1080V1044H414Z'],
  ['a', 'water', 'M148 1318H165L180 1503H150Z'],
  ['a', 'walk', 'M192 50V620L205 1200M262 50Q220 130 250 250 280 350 265 400L275 720 290 940Q310 1040 380 1110 400 1180 370 1235M192 237H240M50 530L60 700 105 1180M50 628L305 622M190 720H270M190 828H270M50 950L295 940M50 1153H290L275 950M50 1250L370 1235 400 1255 470 1267M50 1465H110Q120 1430 150 1430 200 1430 215 1455L415 1445'],
  ['a', 'steps', 'M50 1215H75M215 1207H330Q325 1300 370 1340 415 1370 415 1430V1503M135 1310L140 1503M175 1310L188 1503'],
  ['b', 'walk', 'M232 50V82H1330V50M232 160H1330L1332 890H308L240 200M325 965L600 970 660 952H1332V1240L560 1410 285 1450 315 1440 345 1150ZM1345 1330L1360 1503'],
  ['d', 'walk', 'M172 70V110M172 150V180M65 80H75M65 155H75M60 1067H72M920 1137H935M1030 1125H1050M915 1207H935M1040 1192H1055']
];

const N = [
  ['a', 620, 155, 90, 1432], ['a', 1010, 172, 90, 1424], ['a', 1220, 137, 90, 1420], ['a', 706, 285, 90, 1430], ['a', 920, 272, 90, 1426], ['a', 1390, 385, 90, 2500],
  ['a', 632, 468, 90, 1447], ['a', 770, 502, 90, 1439], ['a', 973, 472, 90, 1427], ['a', 374, 556, 90, 2401], ['a', 588, 538, 90, 1451], ['a', 880, 545, 90, 1431], ['a', 1090, 538, 90, 1423], ['a', 1198, 552, 90, 1417],
  ['a', 388, 808, 90, 2331], ['a', 528, 787, 90, 1478], ['a', 660, 804, 90, 1468], ['a', 842, 787, 90, 1436], ['a', 1175, 747, 90, 1416], ['a', 1050, 808, 90, 1424], ['a', 928, 849, 90, 1430], ['a', 388, 899, 90, 2327], ['a', 583, 891, 90, 1474], ['a', 794, 876, 90, 1440],
  ['a', 500, 1069, 90, 2325], ['a', 1010, 1116, 90, 1433], ['a', 1203, 1134, 90, 1421], ['a', 1283, 1081, 90, 1417], ['a', 798, 1205, 90, 1451], ['a', 1217, 1349, 90, 1424], ['a', 1442, 1328, 90, 1414], ['a', 1023, 1389, 90, 1440], ['a', 578, 1413, 90, 1474], ['a', 528, 1471, 90, 2315], ['a', 707, 1461, 90, 1464], ['a', 863, 1450, 90, 1454], ['a', 1108, 1487, 90, 1430], ['a', 1411, 1499, 90, 1409],
  ['b', 82, 1381, 124, 2304], ['b', 443, 302, 124, 1350], ['b', 602, 572, 124, 1312], ['b', 546, 835, 124, 1333], ['b', 702, 836, 120, 1321], ['b', 852, 836, 124, 1309], ['b', 1101, 800, 120, 1301], ['b', 560, 1035, 124, 1336], ['b', 738, 1034, 124, 1330], ['b', 885, 1048, 124, 1316], ['b', 1061, 1055, 124, 1308], ['b', 1238, 1048, 124, 1300], ['b', 1240, 1193, 120, 1301], ['b', 1091, 1224, 118, 1311], ['b', 893, 1267, 124, 1325], ['b', 723, 1308, 124, 1337], ['b', 550, 1344, 124, 1349],
  ['c', 219, 1372, 124, 2243], ['c', 208, 1427, 124, 2239], ['c', 215, 1483, 124, 2235], ['c', 748, 1256, 124, 1200], ['c', 750, 1323, 124, 2250], ['c', 760, 1398, 124, 2244], ['c', 754, 1469, 124, 2238], ['c', 1083, 1231, 124, 1120], ['c', 1040, 1332, 124, 2257], ['c', 993, 1415, 124, 2249], ['c', 1027, 1468, 124, 2245], ['c', 1272, 1460, 124, 2236],
  ['d', 414, 252, 112, 2371], ['d', 613, 252, 114, 2379], ['d', 219, 493, 110, 2361], ['d', 387, 513, 116, 2349], ['d', 228, 608, 114, 2335], ['d', 374, 600, 114, 2343]
].map(([k, x, y, w, s]) => [k, 'num', x, y, w, s]);
const labels = [
  ['a', 'park', 42, 696, 188, 'eridian'], ['a', 'park', 48, 783, 175, 'll Park'], ['a', 'park', 50, 873, 182, 'alcolm'], ['a', 'park', 62, 962, 142, 'Park)'], ['a', 'park', 48, 495, 14, 'y'],
  ['a', 'memo', 88, 1250, 132, 'Joan of'], ['a', 'memo', 52, 1309, 230, 'rc Memorial'],
  ['a', 'road', 585, 700, 525, 'Chapin Street Northwest', -5], ['a', 'road', 783, 1308, 555, 'Belmont Street Northwest', -4.8],
  ['b', 'road', 428, 142, 697, 'Clifton Street Northwest'], ['b', 'road', 438, 944, 752, 'Belmont Street Northwest'],
  ['b', 'edu-s', 945, 246, 242, 'Wardman'], ['b', 'edu-s', 928, 305, 276, 'Court Child'], ['b', 'edu-s', 905, 365, 321, 'Development'], ['b', 'edu-s', 986, 424, 160, 'Center'],
  ['b', 'edu-s', 938, 1465, 218, 'Meridian'], ['b', 'edu-s', 875, 1522, 350, 'Public Charter'],
  ['c', 'road', 438, 142, 697, 'Clifton Street Northwest'], ['c', 'edu', 667, 344, 208, 'Francis'], ['c', 'edu', 614, 415, 312, 'L. Cardozo'], ['c', 'edu', 624, 486, 294, 'Education'], ['c', 'edu', 650, 557, 240, 'Campus'],
  ['d', 'place', 432, 707, 212, 'Garfield'], ['d', 'place', 443, 778, 190, 'Terrace'], ['d', 'plain', 1171, 880, 150, 'Trellis'], ['d', 'plain', 1163, 946, 165, 'House'],
  ['d', 'senior', 353, 1077, 178, 'Garfield'], ['d', 'senior', 355, 1136, 176, 'Terrrace'], ['d', 'senior', 371, 1196, 138, 'Senior'], ['d', 'senior', 357, 1255, 168, 'Citizens'], ['d', 'senior', 370, 1315, 143, 'Center'],
  ['d', 'plain', 280, 1455, 203, 'Howard'], ['d', 'plain', 252, 1522, 262, 'University'],
  ['d', 'bike', 665, 1422, 208, '10th and'], ['d', 'bike', 687, 1481, 162, 'Florida'],
  ['d', 'road', 1003, 1188, 448, 'Barry Place North', -4.5],
  ['d', 'plain', 1378, 1272, 72, 'Ho'], ['d', 'plain', 1413, 1337, 26, 'P'], ['d', 'plain', 1387, 1402, 54, 'To'], ['d', 'plain', 1400, 1470, 44, '(w']
];
const P = [
  ['a', 500, 124, 2], ['a', 535, 347, 1], ['a', 616, 324, 2], ['a', 388, 442, 1], ['a', 786, 406, 1], ['a', 1068, 406, 1], ['a', 1412, 124, 2], ['a', 1150, 198, 2], ['a', 1262, 274, 2], ['a', 290, 622, 2], ['a', 1162, 930, 1], ['a', 567, 1004, 1], ['a', 1035, 1039, 1], ['a', 1105, 1028, 1], ['a', 1228, 1024, 1], ['a', 1340, 1482, 2],
  ['b', 445, 611, 1], ['b', 710, 731, 1], ['b', 923, 737, 1], ['b', 1182, 527, 2], ['b', 1087, 895, 2], ['c', 1210, 1313, 2],
  ['d', 325, 377, 2], ['d', 527, 356, 2], ['d', 664, 356, 2], ['d', 446, 426, 2], ['d', 1198, 532, 1], ['d', 835, 894, 1], ['d', 560, 1089, 1], ['d', 692, 1119, 1], ['d', 813, 1089, 1], ['d', 828, 1362, 1], ['d', 893, 1545, 1]
];
const label = ([k, cls, x, y, w, s, rot]) => {
  const X = px(k, x), Y = py(k, y);
  return `<text class="${cls}" x="${X}" y="${Y}" textLength="${(w * T[k][2]).toFixed(1)}" lengthAdjust="spacingAndGlyphs"${rot ? ` transform="rotate(${rot} ${X} ${Y})"` : ''}>${s}</text>`;
};
const dot = (k, x, y, r, c) => `<circle cx="${px(k, x)}" cy="${py(k, y)}" r="${r}" fill="${c}"/>`;
const along = (id, d, len, s, cls = '') => `<path id="${id}" d="${d}" fill="none"/><text class="road ${cls}" dy="7"><textPath href="#${id}" textLength="${len}" lengthAdjust="spacingAndGlyphs">${s}</textPath></text>`;
const arrow = (x, y, a) => `<path transform="translate(${x} ${y}) rotate(${a})" d="M0 0H13M13 -4L20 0L13 4Z" fill="#444" stroke="#444" stroke-width="2"/>`;
const signal = (x, y) => `<g transform="translate(${x} ${y})" fill="#e4e4cc" stroke="#555" stroke-width="2"><rect x="-4.500" y="-12" width="9" height="25" rx="4.500"/><circle cy="-7" r="3"/><circle cy=".5" r="3"/><circle cy="8" r="3"/></g>`;
const bike = (x, y) => `<g transform="translate(${x} ${y})" fill="none" stroke="#3f98db" stroke-width="3"><circle cx="-8" cy="9" r="5"/><circle cx="8" cy="9" r="5"/><path d="M-8 9L-3 0H6L8 9M-10 -9H12"/><circle cx="-9" cy="-9" r="3.500" fill="#3f98db"/></g>`;
const statue = (x, y) => `<g transform="translate(${x} ${y})" fill="#6d4a18"><circle cy="-12" r="2.500"/><path d="M-4 -9H4L1 4H-1ZM-5 6H5V9H-5ZM-6 11H6V14H-6Z"/></g>`;
const gate = (x, y) => `<path transform="translate(${x} ${y})" d="M-5 -2L5 -3M-5 3L5 2M-3 -5L-2 5M2 -5L3 5" stroke="#444" stroke-width="2"/>`;
const track = 'M425 753H1120Q1282 770 1282 895 1270 1020 1100 1062L640 1092Q410 1105 340 1040 252 970 252 910 265 765 425 753Z';

document.getElementById('map').innerHTML =
  '<rect x="504" y="1280" width="2184" height="584" fill="#dfdfdf"/>' +
  ground.map(shape).join('') + buildings.map(shape).join('') + seams +
  shape(['c', 'ring-edge', track]) + shape(['c', 'ring', track]) +
  line(minor, 3, '#c4c4c4') + line(minor, 0, '#fff') + line(major, 3, '#8f9638') + line(major, 0, '#f8f8c4') +
  details.map(shape).join('') + N.map(label).join('') + labels.map(label).join('') +
  P.map(([k, x, y, v]) => `<text class="${v === 1 ? 'p' : 'p2'}" x="${px(k, x)}" y="${py(k, y)}">P</text>`).join('') +
  along('st15', 'M645 1520L650 1630Q652 1680 675 1698L722 1728', 236, '15th Street Northwest') +
  along('st14', 'M1244 1322L1252 1420 1262 1548', 226, '14th Street Northwest', 'on-yellow') +
  along('st13', 'M1671 1428V1654', 226, '13th Street Northwest') +
  along('florida', 'M1813 1739L1950 1726 2080 1717', 268, 'Florida Avenue Northwest', 'on-yellow') +
  along('av', 'M2480 1272L2486 1360 2497 1482', 209, 'n Avenue Northwest', 'on-yellow') +
  along('rt', 'M2678 1280L2683 1350 2690 1425', 146, 'eet Northwest') +
  along('w1', 'M1284 1866L1353 1850', 70, 'thwest', 'on-yellow') +
  along('w2', 'M1835 1870V1800', 68, 'thwest') +
  arrow(646, 1508, -90) + arrow(735, 1535, -3) + arrow(1771, 1309, 0) + arrow(1835, 1797, -90) +
  signal(2169, 1707) + signal(2509, 1729) + gate(2530, 1517) + gate(2677, 1493) +
  bike(1266, 1632) + bike(2424, 1797) + statue(554, 1724) + statue(691, 1840) + statue(604, 1326) +
  '<g fill="#6d4a18"><path d="M1180 1423H1192V1429A6 5 0 0 1 1180 1429ZM1179 1422H1193V1425H1179ZM1176 1450V1439Q1176 1436 1180 1436H1192Q1196 1436 1196 1439V1450Z"/><path d="M1179 1450L1194 1438" stroke="#d6cec8" stroke-width="1.500"/></g>' +
  '<g fill="none" stroke="#a748b5" stroke-width="2.500"><path d="M1205 1681H1229L1225 1693H1209ZM1229 1681L1234 1677M1209 1693V1697H1226M1213 1681V1693M1219 1681V1693M1207 1687H1227"/><circle cx="1211" cy="1699" r="1"/><circle cx="1223" cy="1699" r="1"/></g>' +
  dot('a', 342, 1132, 10, '#aab8dc') + dot('a', 342, 1132, 3, '#3d4de0') +
  dot('a', 1512, 682, 4.5, '#c77a22') + dot('a', 1526, 899, 4.5, '#c77a22') + dot('a', 1529, 1458, 4, '#a748b5') +
  dot('c', 1293, 1190, 4.5, '#c77a22') + dot('c', 1023, 1226, 4, '#a748b5') + dot('b', 1165, 777, 9.5, '#5578a6');

document.querySelectorAll('[data-w]').forEach(el => {
  const w = +el.dataset.w, n = el.offsetWidth;
  el.style.transform = `scaleX(${w / n})`;
  el.style.marginRight = `${w - n}px`;
});
```
